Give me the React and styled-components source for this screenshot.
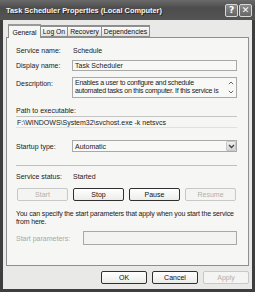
import React from "react";
import styled, { createGlobalStyle } from "styled-components";

const Global = createGlobalStyle`
  html, body {
    margin: 0;
    padding: 0;
    background: #3c3c3c;
  }
  * {
    box-sizing: border-box;
  }
`;

export default function App() {
  return (
    <>
      <Global />
      <Window>
        <TitleBar>
          <Title>Task Scheduler Properties (Local Computer)</Title>
          <Caption>
            <CapButton>?</CapButton>
            <CapButton>✕</CapButton>
          </Caption>
        </TitleBar>

        <Body>
          <Tabs>
            <Tab active width={33}>General</Tab>
            <Tab width={28}>Log On</Tab>
            <Tab width={35}>Recovery</Tab>
            <Tab width={49}>Dependencies</Tab>
          </Tabs>

          <Panel>
            <Row top={9}>
              <Label>Service name:</Label>
              <Value>Schedule</Value>
            </Row>

            <Row top={6}>
              <Label>Display name:</Label>
              <Field>Task Scheduler</Field>
            </Row>

            <Row top={6} align="flex-start">
              <Label pad={3}>Description:</Label>
              <TextArea>
                <span>
                  Enables a user to configure and schedule
                  <br />
                  automated tasks on this computer. If this service is
                </span>
                <Scroll>
                  <svg width="6" height="4" viewBox="0 0 6 4">
                    <path d="M0.8 3.2 L3 1 L5.2 3.2" stroke="#666" strokeWidth="1" fill="none" />
                  </svg>
                  <svg width="6" height="4" viewBox="0 0 6 4">
                    <path d="M0.8 0.8 L3 3 L5.2 0.8" stroke="#666" strokeWidth="1" fill="none" />
                  </svg>
                </Scroll>
              </TextArea>
            </Row>

            <Caption2>Path to executable:</Caption2>
            <PathBox>F:\WINDOWS\System32\svchost.exe -k netsvcs</PathBox>

            <Row top={12}>
              <Label>Startup type:</Label>
              <Select>
                <span>Automatic</span>
                <DropButton>
                  <svg width="7" height="5" viewBox="0 0 7 5">
                    <path d="M1 1 L3.5 3.5 L6 1" stroke="#444" strokeWidth="1.3" fill="none" />
                  </svg>
                </DropButton>
              </Select>
            </Row>

            <Separator />

            <Row top={7}>
              <Label>Service status:</Label>
              <Value>Started</Value>
            </Row>

            <ButtonRow>
              <Button disabled>Start</Button>
              <Button>Stop</Button>
              <Button>Pause</Button>
              <Button disabled>Resume</Button>
            </ButtonRow>

            <Info>
              You can specify the start parameters that apply when you start the service
              <br />
              from here.
            </Info>

            <Row top={5}>
              <Label dim wide>Start parameters:</Label>
              <Field dim />
            </Row>
          </Panel>

          <Footer>
            <DialogButton>OK</DialogButton>
            <DialogButton>Cancel</DialogButton>
            <DialogButton disabled>Apply</DialogButton>
          </Footer>
        </Body>
      </Window>
    </>
  );
}

const Window = styled.div`
  width: 255px;
  height: 292px;
  display: flex;
  flex-direction: column;
  background: #3e3e3e;
  padding: 0 3px 3px 3px;
  font-family: "Liberation Sans", Arial, sans-serif;
  font-size: 7px;
  color: #1a1a1a;
  overflow: hidden;
`;

const TitleBar = styled.div`
  height: 20px;
  flex-shrink: 0;
  margin: 0 -3px;
  padding: 0 3px 0 6px;
  display: flex;
  align-items: center;
  justify-content: space-between;
  background: linear-gradient(#6a6a6a, #4c4c4c 40%, #555 100%);
`;

const Title = styled.div`
  color: #f4f4f4;
  font-family: "Liberation Sans", Arial, sans-serif;
  font-size: 7.4px;
  font-weight: bold;
  white-space: nowrap;
  text-shadow: 1px 1px 0 #2a2a2a;
`;

const Caption = styled.div`
  display: flex;
  gap: 1px;
`;

const CapButton = styled.div`
  width: 13px;
  height: 13px;
  border: 1px solid #d8d8d8;
  border-radius: 2px;
  background: linear-gradient(#8a8a8a, #666);
  color: #fff;
  font-family: "DejaVu Sans", sans-serif;
  font-weight: bold;
  font-size: 9px;
  display: flex;
  align-items: center;
  justify-content: center;
`;

const Body = styled.div`
  flex: 1;
  background: #e9e9e7;
  padding: 3px 3px 0 3px;
  display: flex;
  flex-direction: column;
`;

const Tabs = styled.div`
  display: flex;
  align-items: flex-end;
  height: 14px;
  flex-shrink: 0;
  padding-left: 2px;
`;

const Tab = styled.div`
  width: ${(p) => p.width}px;
  height: ${(p) => (p.active ? 14 : 12)}px;
  border: 1px solid #8e8e8e;
  border-bottom: ${(p) => (p.active ? "none" : "1px solid #8e8e8e")};
  border-top: 2px solid ${(p) => (p.active ? "#9a9a9a" : "#8e8e8e")};
  background: ${(p) => (p.active ? "#f6f6f4" : "linear-gradient(#fafafa, #e2e2e0)")};
  margin-right: -1px;
  margin-bottom: ${(p) => (p.active ? -1 : 0)}px;
  position: relative;
  z-index: ${(p) => (p.active ? 2 : 1)};
  display: flex;
  align-items: center;
  justify-content: center;
  font-size: 6.8px;
  color: #111;
`;

const Panel = styled.div`
  height: 229px;
  flex-shrink: 0;
  border: 1px solid #8e8e8e;
  background: #f6f6f4;
  padding: 0 11px 0 9px;
  display: flex;
  flex-direction: column;
`;

const Row = styled.div`
  display: flex;
  align-items: ${(p) => p.align || "center"};
  margin-top: ${(p) => p.top}px;
`;

const Label = styled.div`
  width: ${(p) => (p.wide ? 67 : 56)}px;
  flex-shrink: 0;
  padding-top: ${(p) => p.pad || 0}px;
  color: ${(p) => (p.dim ? "#a8a8a8" : "#1a1a1a")};
`;

const Value = styled.div`
  padding-left: 1px;
`;

const Field = styled.div`
  flex: 1;
  height: ${(p) => (p.dim ? 14 : 11)}px;
  border: 1px solid #a9a9a9;
  background: ${(p) => (p.dim ? "#f3f3f1" : "#f8f8f6")};
  padding: 0 2px;
  display: flex;
  align-items: center;
`;

const TextArea = styled.div`
  flex: 1;
  height: 21px;
  border: 1px solid #a9a9a9;
  background: #f8f8f6;
  display: flex;
  line-height: 8px;
  span {
    flex: 1;
    padding: 1px 1px 1px 2px;
    white-space: nowrap;
    overflow: hidden;
    letter-spacing: -0.25px;
  }
`;

const Scroll = styled.div`
  width: 10px;
  display: flex;
  flex-direction: column;
  justify-content: space-between;
  align-items: center;
  padding: 3px 0 3px;
`;

const Caption2 = styled.div`
  margin-top: 9px;
  line-height: 8px;
`;

const PathBox = styled.div`
  margin-top: 1px;
  height: 12px;
  border-top: 1px solid #c4c4c4;
  border-bottom: 1px solid #e0e0e0;
  display: flex;
  align-items: center;
  padding-left: 1px;
`;

const Select = styled.div`
  flex: 1;
  height: 12px;
  border: 1px solid #a9a9a9;
  background: #f8f8f6;
  padding: 0 0 0 2px;
  display: flex;
  align-items: center;
  justify-content: space-between;
`;

const DropButton = styled.div`
  width: 10px;
  height: 10px;
  border: 1px solid #c8c8c8;
  border-radius: 1px;
  background: linear-gradient(#f0f0f0, #d4d4d4);
  display: flex;
  align-items: center;
  justify-content: center;
`;

const Separator = styled.div`
  margin-top: 13px;
  height: 1px;
  flex-shrink: 0;
  background: #c0c0c0;
`;

const ButtonRow = styled.div`
  display: flex;
  gap: 5px;
  margin-top: 8px;
  padding-left: 1px;
`;

const Button = styled.div`
  width: 51px;
  height: 13px;
  flex-shrink: 0;
  border: 1px solid ${(p) => (p.disabled ? "#c8c8c8" : "#303030")};
  border-radius: 2px;
  background: ${(p) => (p.disabled ? "#f4f4f2" : "linear-gradient(#ffffff, #ececea)")};
  color: ${(p) => (p.disabled ? "#b0b0b0" : "#111")};
  display: flex;
  align-items: center;
  justify-content: center;
`;

const Info = styled.div`
  margin-top: 9px;
  line-height: 8px;
  white-space: nowrap;
  letter-spacing: -0.15px;
`;

const Footer = styled.div`
  display: flex;
  justify-content: flex-end;
  gap: 5px;
  padding-top: 5px;
`;

const DialogButton = styled(Button)`
  width: 46px;
  height: 13px;
`;
